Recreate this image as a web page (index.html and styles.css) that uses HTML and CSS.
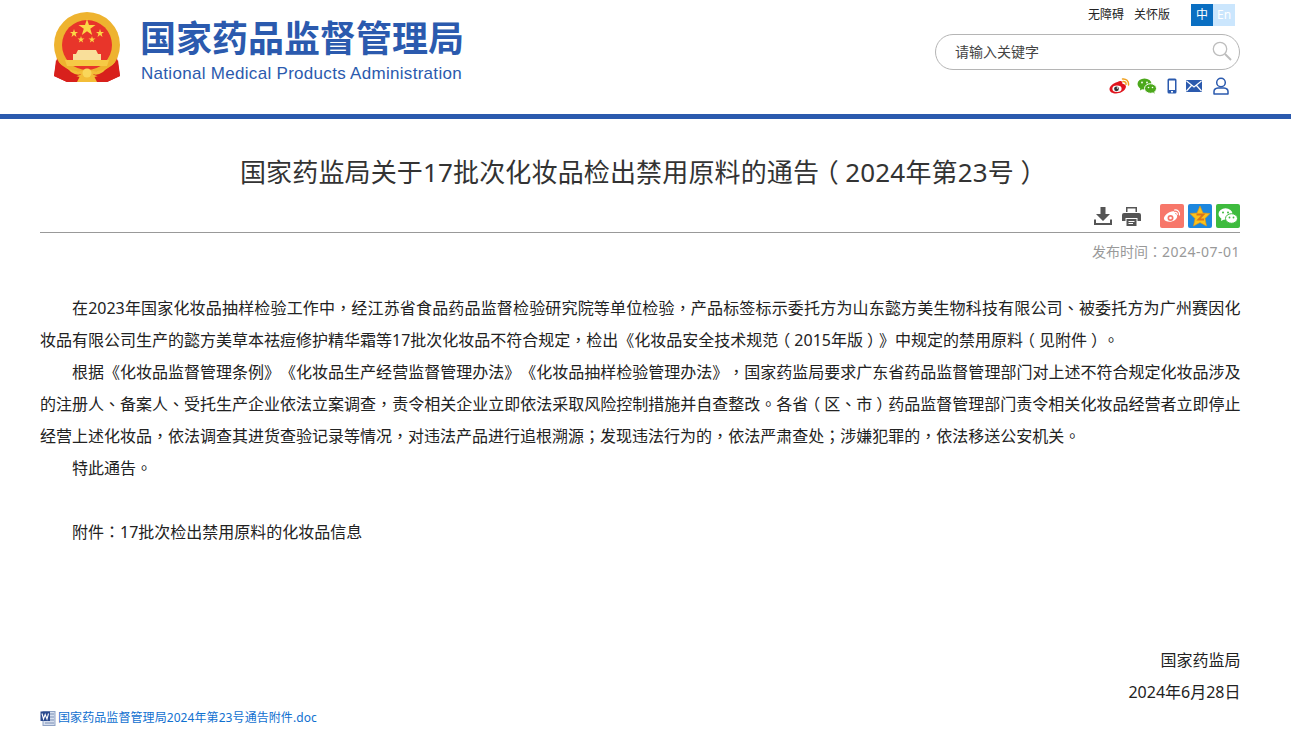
FILE: index.html
```html
<!DOCTYPE html>
<html>
<head>
    <meta charset="UTF-8">
    <title>国家药监局关于17批次化妆品检出禁用原料的通告（2024年第23号）</title>
    <link rel="stylesheet" href="styles.css">
</head>
<body>
    <!-- Header -->
    <div class="header">
        <div class="header-inner">
            <div class="logo">
                <svg class="emblem" width="68" height="72" viewBox="0 0 68 72">
                    <path d="M4 46 L1 64 L14 70 L27 70 L34 66 L41 70 L54 70 L67 64 L64 46 Z" fill="#d8201c"/>
                    <circle cx="34" cy="33" r="33" fill="#eeb32f"/>
                    <circle cx="34" cy="33" r="25" fill="#e8352a"/>
                    <polygon points="34,7 36,13 42.500,13 37.300,16.800 39.200,23 34,19.200 28.800,23 30.800,16.800 25.500,13 32,13" fill="#fbd746"/>
                    <polygon points="21,17 22,20 25,20 22.600,21.800 23.500,25 21,23 18.500,25 19.400,21.800 17,20 20,20" fill="#fbd746"/>
                    <polygon points="47,17 48,20 51,20 48.600,21.800 49.500,25 47,23 44.500,25 45.400,21.800 43,20 46,20" fill="#fbd746"/>
                    <polygon points="28,24 28.800,26.500 31.500,26.500 29.300,28 30.100,30.600 28,29 25.900,30.600 26.700,28 24.500,26.500 27.200,26.500" fill="#fbd746"/>
                    <polygon points="39,24 39.800,26.500 42.500,26.500 40.300,28 41.100,30.600 39,29 36.900,30.600 37.700,28 35.500,26.500 38.200,26.500" fill="#fbd746"/>
                    <path d="M25 38 H43 L45 42 H48 V48 H20 V42 H23 Z" fill="#f9df9a"/>
                    <path d="M12 48 H56 L54 54 H14 Z" fill="#f6c945"/>
                    <path d="M3 48 Q18 64 34 58 Q50 64 65 48 L67 64 L54 70 L44 64 L34 60 L24 64 L14 70 L1 64 Z" fill="#d8201c"/>
                    <path d="M14 56 Q24 62 34 57 Q44 62 54 56 L50 60 Q44 64 40 62 L44 70 H24 L28 62 Q24 64 18 60 Z" fill="#f3bd37"/>
                    <circle cx="34" cy="61" r="4.500" fill="#f9d65a"/>
                </svg>
                <div class="logo-text">
                    <div class="logo-cn">国家药品监督管理局</div>
                    <div class="logo-en">National Medical Products Administration</div>
                </div>
            </div>
            <div class="tools">
                <div class="top-links">
                    <a href="#">无障碍</a>
                    <a href="#">关怀版</a>
                    <div class="lang">
                        <span class="lang-zh">中</span><span class="lang-en">En</span>
                    </div>
                </div>
                <div class="search">
                    <span>请输入关键字</span>
                    <svg width="20" height="20" viewBox="0 0 20 20" fill="none" stroke="#bdbdbd">
                        <circle cx="8" cy="8" r="6.700" stroke-width="1.300"/>
                        <path d="M13 13 L19 19" stroke-width="2"/>
                    </svg>
                </div>
                <div class="social">
                    <svg width="21" height="17" viewBox="0 0 21 17">
                        <path d="M8.500 4 C11 2.500 13 3 13.300 4.500 C13.500 5.500 13.300 6 14.500 6 C17 6.500 17.500 8.500 16.500 10.300 C15 13.500 11 15.500 7 15.500 C3.500 15.500 .5 14 .5 11 C.5 8.500 4 5 8.500 4 Z" fill="#e0141d"/>
                        <ellipse cx="8" cy="10.800" rx="4.600" ry="3.300" fill="#fff"/>
                        <circle cx="7.500" cy="10.800" r="2.400" fill="#333"/>
                        <circle cx="8.500" cy="10" r=".8" fill="#fff"/>
                        <path d="M13.500 1 C17 .5 20 3 19.500 7 M14 3.500 C15.800 3.300 17.300 4.500 17 6.300" fill="none" stroke="#f0a01e" stroke-width="1.500" stroke-linecap="round"/>
                    </svg>
                    <svg class="social-wechat" width="20" height="16" viewBox="0 0 20 16">
                        <ellipse cx="7.500" cy="6" rx="7" ry="5.500" fill="#4ca81c"/>
                        <path d="M3.500 9 L3 12.500 L7 10 Z" fill="#4ca81c"/>
                        <ellipse cx="13.500" cy="10.500" rx="6" ry="4.800" fill="#4ca81c" stroke="#fff"/>
                        <path d="M16 14 L17.500 16 L17 12.500 Z" fill="#4ca81c"/>
                        <circle cx="5" cy="4.500" r=".9" fill="#fff"/>
                        <circle cx="10" cy="4.500" r=".9" fill="#fff"/>
                        <circle cx="11.500" cy="9.500" r=".8" fill="#fff"/>
                        <circle cx="15.500" cy="9.500" r=".8" fill="#fff"/>
                    </svg>
                    <svg class="social-phone" width="10" height="16" viewBox="0 0 10 16">
                        <rect x=".5" y=".5" width="9" height="15" rx="1.500" fill="#2b5aae"/>
                        <rect x="2" y="2.500" width="6" height="9.500" fill="#fff"/>
                        <rect x="4" y="13" width="2" height="1.500" fill="#fff"/>
                    </svg>
                    <svg width="16" height="12" viewBox="0 0 16 12">
                        <rect width="16" height="12" rx="1" fill="#2b5aae"/>
                        <path d="M.5 1 L8 7 L15.500 1 M.5 11 L5.500 5.500 M15.500 11 L10.500 5.500" fill="none" stroke="#fff" stroke-width="1.200"/>
                    </svg>
                    <svg class="social-user" width="16" height="18" viewBox="0 0 16 18" fill="none" stroke="#2b5aae" stroke-width="1.500">
                        <circle cx="8" cy="5.500" r="4.300"/>
                        <path d="M1 17 V14.500 Q1 11.500 5 11 H11 Q15 11.500 15 14.500 V17 Z" stroke-linejoin="round"/>
                    </svg>
                </div>
            </div>
        </div>
    </div>

    <div class="article">
        <h1>国家药监局关于17批次化妆品检出禁用原料的通告<span class="pt lp">（</span>2024年第23号<span class="pt rp">）</span></h1>

        <!-- Download, print and share -->
        <div class="actions">
            <svg width="18" height="18" viewBox="0 0 18 18" fill="#555">
                <path d="M6.500 0 H11.500 V7 H16 L9 14 L2 7 H6.500 Z"/>
                <path d="M0 12.500 H2 V16 H16 V12.500 H18 V18 H0 Z"/>
            </svg>
            <svg class="print" width="19" height="19" viewBox="0 0 19 19" fill="#555">
                <path d="M4 0 H15 V5 H13.500 V1.500 H5.500 V5 H4 Z"/>
                <path d="M2 6 H17 Q19 6 19 8 V14 H15.500 V11 H3.500 V14 H0 V8 Q0 6 2 6 Z"/>
                <path d="M4.500 12 H14.500 V19 H4.500 Z M6.500 14 V15 H12.500 V14 Z M6.500 16 V17 H11 V16 Z" fill-rule="evenodd"/>
            </svg>
            <svg class="share-first" width="24" height="24" viewBox="0 0 24 24">
                <rect width="24" height="24" rx="2" fill="#f7776a"/>
                <path d="M10 8 C13 6.500 15 7 15 9 C15 10 16 10 16.500 10.500 C18 12 17 14.500 15 16 C12 18.500 5 18.500 4 15 C3.500 12.500 7 9 10 8 Z" fill="#fff"/>
                <circle cx="10.500" cy="14" r="3" fill="#f7776a"/>
                <circle cx="10.500" cy="14" r="1.300" fill="#fff"/>
                <path d="M14.500 6 C17.500 5.500 20 8 19.500 11 M15 8.500 C16.500 8.300 17.500 9.500 17.300 10.500" fill="none" stroke="#fff" stroke-width="1.200" stroke-linecap="round"/>
            </svg>
            <svg width="24" height="24" viewBox="0 0 24 24">
                <rect width="24" height="24" rx="2" fill="#1d87de"/>
                <polygon points="12,2 15,9 22,9.500 17,14.500 18.500,22 12,18.500 5.500,22 7,14.500 2,9.500 9,9" fill="#fbc21c" stroke="#e8960f" stroke-width=".6"/>
                <path d="M8.500 10.500 H15.500 L10.500 15.500 H16" fill="none" stroke="#d9731c" stroke-width="1.800"/>
            </svg>
            <svg width="24" height="24" viewBox="0 0 24 24">
                <rect width="24" height="24" rx="2" fill="#3ebb3e"/>
                <ellipse cx="9.500" cy="10" rx="7" ry="5.800" fill="#fff"/>
                <path d="M5.500 13.500 L5 17 L9 15 Z" fill="#fff"/>
                <ellipse cx="15.500" cy="14.500" rx="6" ry="4.800" fill="#fff" stroke="#3ebb3e"/>
                <circle cx="7" cy="8.500" r="1" fill="#3ebb3e"/>
                <circle cx="12" cy="8.500" r="1" fill="#3ebb3e"/>
                <circle cx="13.500" cy="13.500" r=".9" fill="#3ebb3e"/>
                <circle cx="17.500" cy="13.500" r=".9" fill="#3ebb3e"/>
            </svg>
        </div>

        <div class="date">发布时间<span class="pt">：</span><span class="date-num">2024-07-01</span></div>

        <div class="content">
            <p>在2023年国家化妆品抽样检验工作中<span class="pt">，</span>经江苏省食品药品监督检验研究院等单位检验<span class="pt">，</span>产品标签标示委托方为山东懿方美生物科技有限公司<span class="pt">、</span>被委托方为广州赛因化妆品有限公司生产的懿方美草本祛痘修护精华霜等17批次化妆品不符合规定<span class="pt">，</span>检出《化妆品安全技术规范<span class="pt lp">（</span>2015年版<span class="pt rp">）</span>》中规定的禁用原料<span class="pt lp">（</span>见附件<span class="pt rp">）</span><span class="pt">。</span></p>
            <p>根据《化妆品监督管理条例》《化妆品生产经营监督管理办法》《化妆品抽样检验管理办法》<span class="pt">，</span>国家药监局要求广东省药品监督管理部门对上述不符合规定化妆品涉及的注册人<span class="pt">、</span>备案人<span class="pt">、</span>受托生产企业依法立案调查<span class="pt">，</span>责令相关企业立即依法采取风险控制措施并自查整改<span class="pt">。</span>各省<span class="pt lp">（</span>区<span class="pt">、</span>市<span class="pt rp">）</span>药品监督管理部门责令相关化妆品经营者立即停止经营上述化妆品<span class="pt">，</span>依法调查其进货查验记录等情况<span class="pt">，</span>对违法产品进行追根溯源<span class="pt">；</span>发现违法行为的<span class="pt">，</span>依法严肃查处<span class="pt">；</span>涉嫌犯罪的<span class="pt">，</span>依法移送公安机关<span class="pt">。</span></p>
            <p>特此通告<span class="pt">。</span></p>
            <p>&nbsp;</p>
            <p>附件<span class="pt">：</span>17批次检出禁用原料的化妆品信息</p>
            <p>&nbsp;</p>
            <p>&nbsp;</p>
            <p>&nbsp;</p>
            <p class="sign">国家药监局</p>
            <p class="sign">2024年6月28日</p>
        </div>

        <div class="attachment">
            <svg width="16" height="16" viewBox="0 0 16 16">
                <rect x="3" y="1.500" width="12" height="14" fill="#d5deee" stroke="#8fa2c4"/>
                <path d="M10 4 H14 M10 7 H14 M10 10 H14 M5 13 H14" stroke="#7d90b5"/>
                <rect x=".5" y="1.500" width="9.500" height="9.500" fill="#2a4a8e"/>
                <path d="M2 3.500 L3.500 9 L5.200 4.500 L7 9 L8.500 3.500" fill="none" stroke="#fff" stroke-width="1.100"/>
            </svg>
            <a href="#">国家药品监督管理局2024年第23号通告附件.doc</a>
        </div>
    </div>
</body>
</html>
```

FILE: styles.css
```css
body {
    margin: 0;
    background: #fff;
    color: #333;
    font-family: "Noto Sans", "Noto Sans CJK SC", sans-serif;
    text-spacing-trim: space-all;
    overflow: hidden;
}
a {
    color: inherit;
    text-decoration: none;
}
/* centred full-width punctuation */
.pt {
    font-family: "Noto Sans CJK TC", sans-serif;
    line-height: 1;
}
.lp,
.rp {
    display: inline-block;
}
.lp {
    transform: translateX(-.25em);
}
.rp {
    transform: translateX(.25em);
}
.header {
    height: 114px;
    border-bottom: 5px solid #2b5aae;
}
.header-inner {
    width: 1200px;
    margin-left: 40px;
    display: flex;
    justify-content: space-between;
}
.logo {
    display: flex;
    align-items: flex-start;
    padding: 12px 0 0 13px;
}
.emblem {
    margin-right: 19px;
}
.logo-text {
    color: #2b5aae;
}
.logo-cn {
    font-size: 36px;
    line-height: 40px;
    margin-top: 7px;
    font-weight: 700;
    white-space: nowrap;
}
.logo-en {
    font-family: "Liberation Sans", sans-serif;
    font-size: 17px;
    line-height: 20px;
    margin-top: 5px;
    margin-left: 1px;
    letter-spacing: .3px;
    white-space: nowrap;
}
.tools {
    width: 305px;
    display: flex;
    flex-direction: column;
    align-items: flex-end;
}
.top-links {
    display: flex;
    align-items: center;
    font-size: 12px;
    line-height: 22px;
    color: #222;
    margin-top: 4px;
    padding-right: 5px;
}
.top-links a {
    margin-right: 10px;
}
.lang {
    display: flex;
    margin-left: 11px;
    text-align: center;
}
.lang span {
    width: 22px;
    height: 22px;
}
.lang-zh {
    background: #0a6fc2;
    color: #fff;
}
.lang-en {
    background: #cbe6fd;
    color: #fff;
}
.search {
    width: 305px;
    height: 36px;
    box-sizing: border-box;
    margin-top: 8px;
    padding: 0 7px 2px 19px;
    border: 1px solid #b5b5b5;
    border-radius: 18px;
    display: flex;
    align-items: center;
    justify-content: space-between;
    font-size: 14px;
    color: #444;
}
.social {
    display: flex;
    align-items: center;
    height: 18px;
    margin-top: 7px;
    padding-right: 11px;
    gap: 9px;
}
.social-wechat {
    margin-left: -2px;
}
.social-phone {
    margin-left: 1px;
}
.social-user {
    margin-left: 2px;
}
.article {
    width: 1200px;
    margin-left: 40px;
}
h1 {
    margin: 36px 0 0;
    font-size: 26px;
    line-height: 34px;
    font-weight: 400;
    letter-spacing: .15px;
    text-align: center;
    color: #333;
}
.actions {
    display: flex;
    justify-content: flex-end;
    align-items: center;
    height: 26px;
    margin-top: 14px;
    border-bottom: 1px solid #999;
    padding-bottom: 3px;
    gap: 4px;
}
.print {
    margin-left: 6px;
}
.share-first {
    margin-left: 15px;
}
.date {
    margin-top: 9px;
    text-align: right;
    font-size: 14px;
    line-height: 20px;
    color: #999;
}
.date-num {
    letter-spacing: .5px;
}
.content {
    margin-top: 30px;
    font-size: 16px;
    line-height: 32px;
    color: #222;
}
.content p {
    margin: 0 -.5px 0 0;
    text-indent: 2em;
    text-align: justify;
}
.content .lp,
.content .rp {
    text-indent: 0;
}
.content .sign {
    text-align: right;
}
.attachment {
    display: flex;
    align-items: center;
    gap: 2px;
    margin-top: 2px;
    font-size: 12px;
    line-height: 16px;
    letter-spacing: .08px;
    color: #1070d0;
}
```
